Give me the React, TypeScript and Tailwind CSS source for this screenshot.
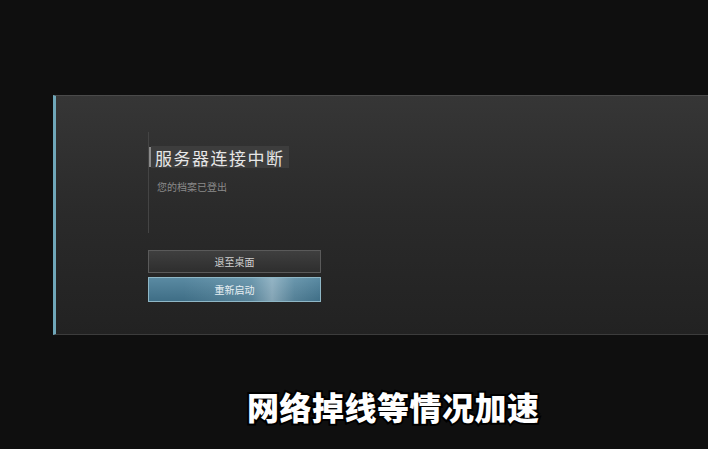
import React from 'react';

const cjk = { fontFamily: '"Noto Sans CJK SC", "Noto Sans", sans-serif' };

const DisconnectDialog: React.FC = () => {
  return (
    <div className="flex h-[240px] w-full border-l-[3px] border-[#6fa7b9] border-t border-t-[#4a4a4a] border-b border-b-[#3c3c3c] bg-gradient-to-b from-[#363636] via-[#2a2a2a] to-[#222222]">
      <div className="ml-[92px] flex flex-col pt-[36px]">
        {/* title block with thin rule on the left */}
        <div className="flex h-[101px] flex-col border-l border-[#444444] pt-[14px]">
          <div className="flex items-center">
            <div className="h-[20px] w-[2px] bg-[#8a8a8a]" />
            <div className="flex h-[22px] items-center bg-[#3d3d3d] pl-[4px] pr-[4px] text-[17px] leading-none tracking-[1.5px] text-[#e6e6e6]" style={cjk}>
              服务器连接中断
            </div>
          </div>
          <div className="mt-[14px] pl-[8px] text-[10px] leading-none text-[#8a8a8a]" style={cjk}>
            您的档案已登出
          </div>
        </div>

        <div className="mt-[17px] flex w-[173px] flex-col gap-[4px]">
          <button className="flex h-[23px] items-center justify-center border border-[#5a5a5a] bg-gradient-to-b from-[#3f3f3f] to-[#2e2e2e] text-[10px] text-[#d0d0d0]" style={cjk}>
            退至桌面
          </button>
          <button className="relative flex h-[25px] items-center justify-center overflow-hidden border border-[#8fb7c6] bg-gradient-to-b from-[#5a8aa2] to-[#3f6e86] text-[10px] text-[#e8f0f4]" style={cjk}>
            <span className="pointer-events-none absolute inset-0 bg-[linear-gradient(90deg,transparent_20%,rgba(200,225,235,0.18)_60%,rgba(235,245,250,0.4)_72%,rgba(200,225,235,0.15)_85%,transparent_100%)]" />
            <span className="relative">重新启动</span>
          </button>
        </div>
      </div>
    </div>
  );
};

export default function App() {
  return (
    <div className="flex h-[449px] w-[708px] flex-col overflow-hidden bg-[#0f0f0f]">
      <div className="mt-[95px] pl-[53px]">
        <DisconnectDialog />
      </div>
      <div className="mt-[55px] flex pl-[247px]">
        <span
          className="text-[32px] font-black leading-none tracking-[0.5px] text-white [paint-order:stroke_fill] [-webkit-text-stroke:4px_#000]"
          style={{ fontFamily: '"Noto Sans CJK SC", sans-serif' }}
        >
          网络掉线等情况加速
        </span>
      </div>
    </div>
  );
}
